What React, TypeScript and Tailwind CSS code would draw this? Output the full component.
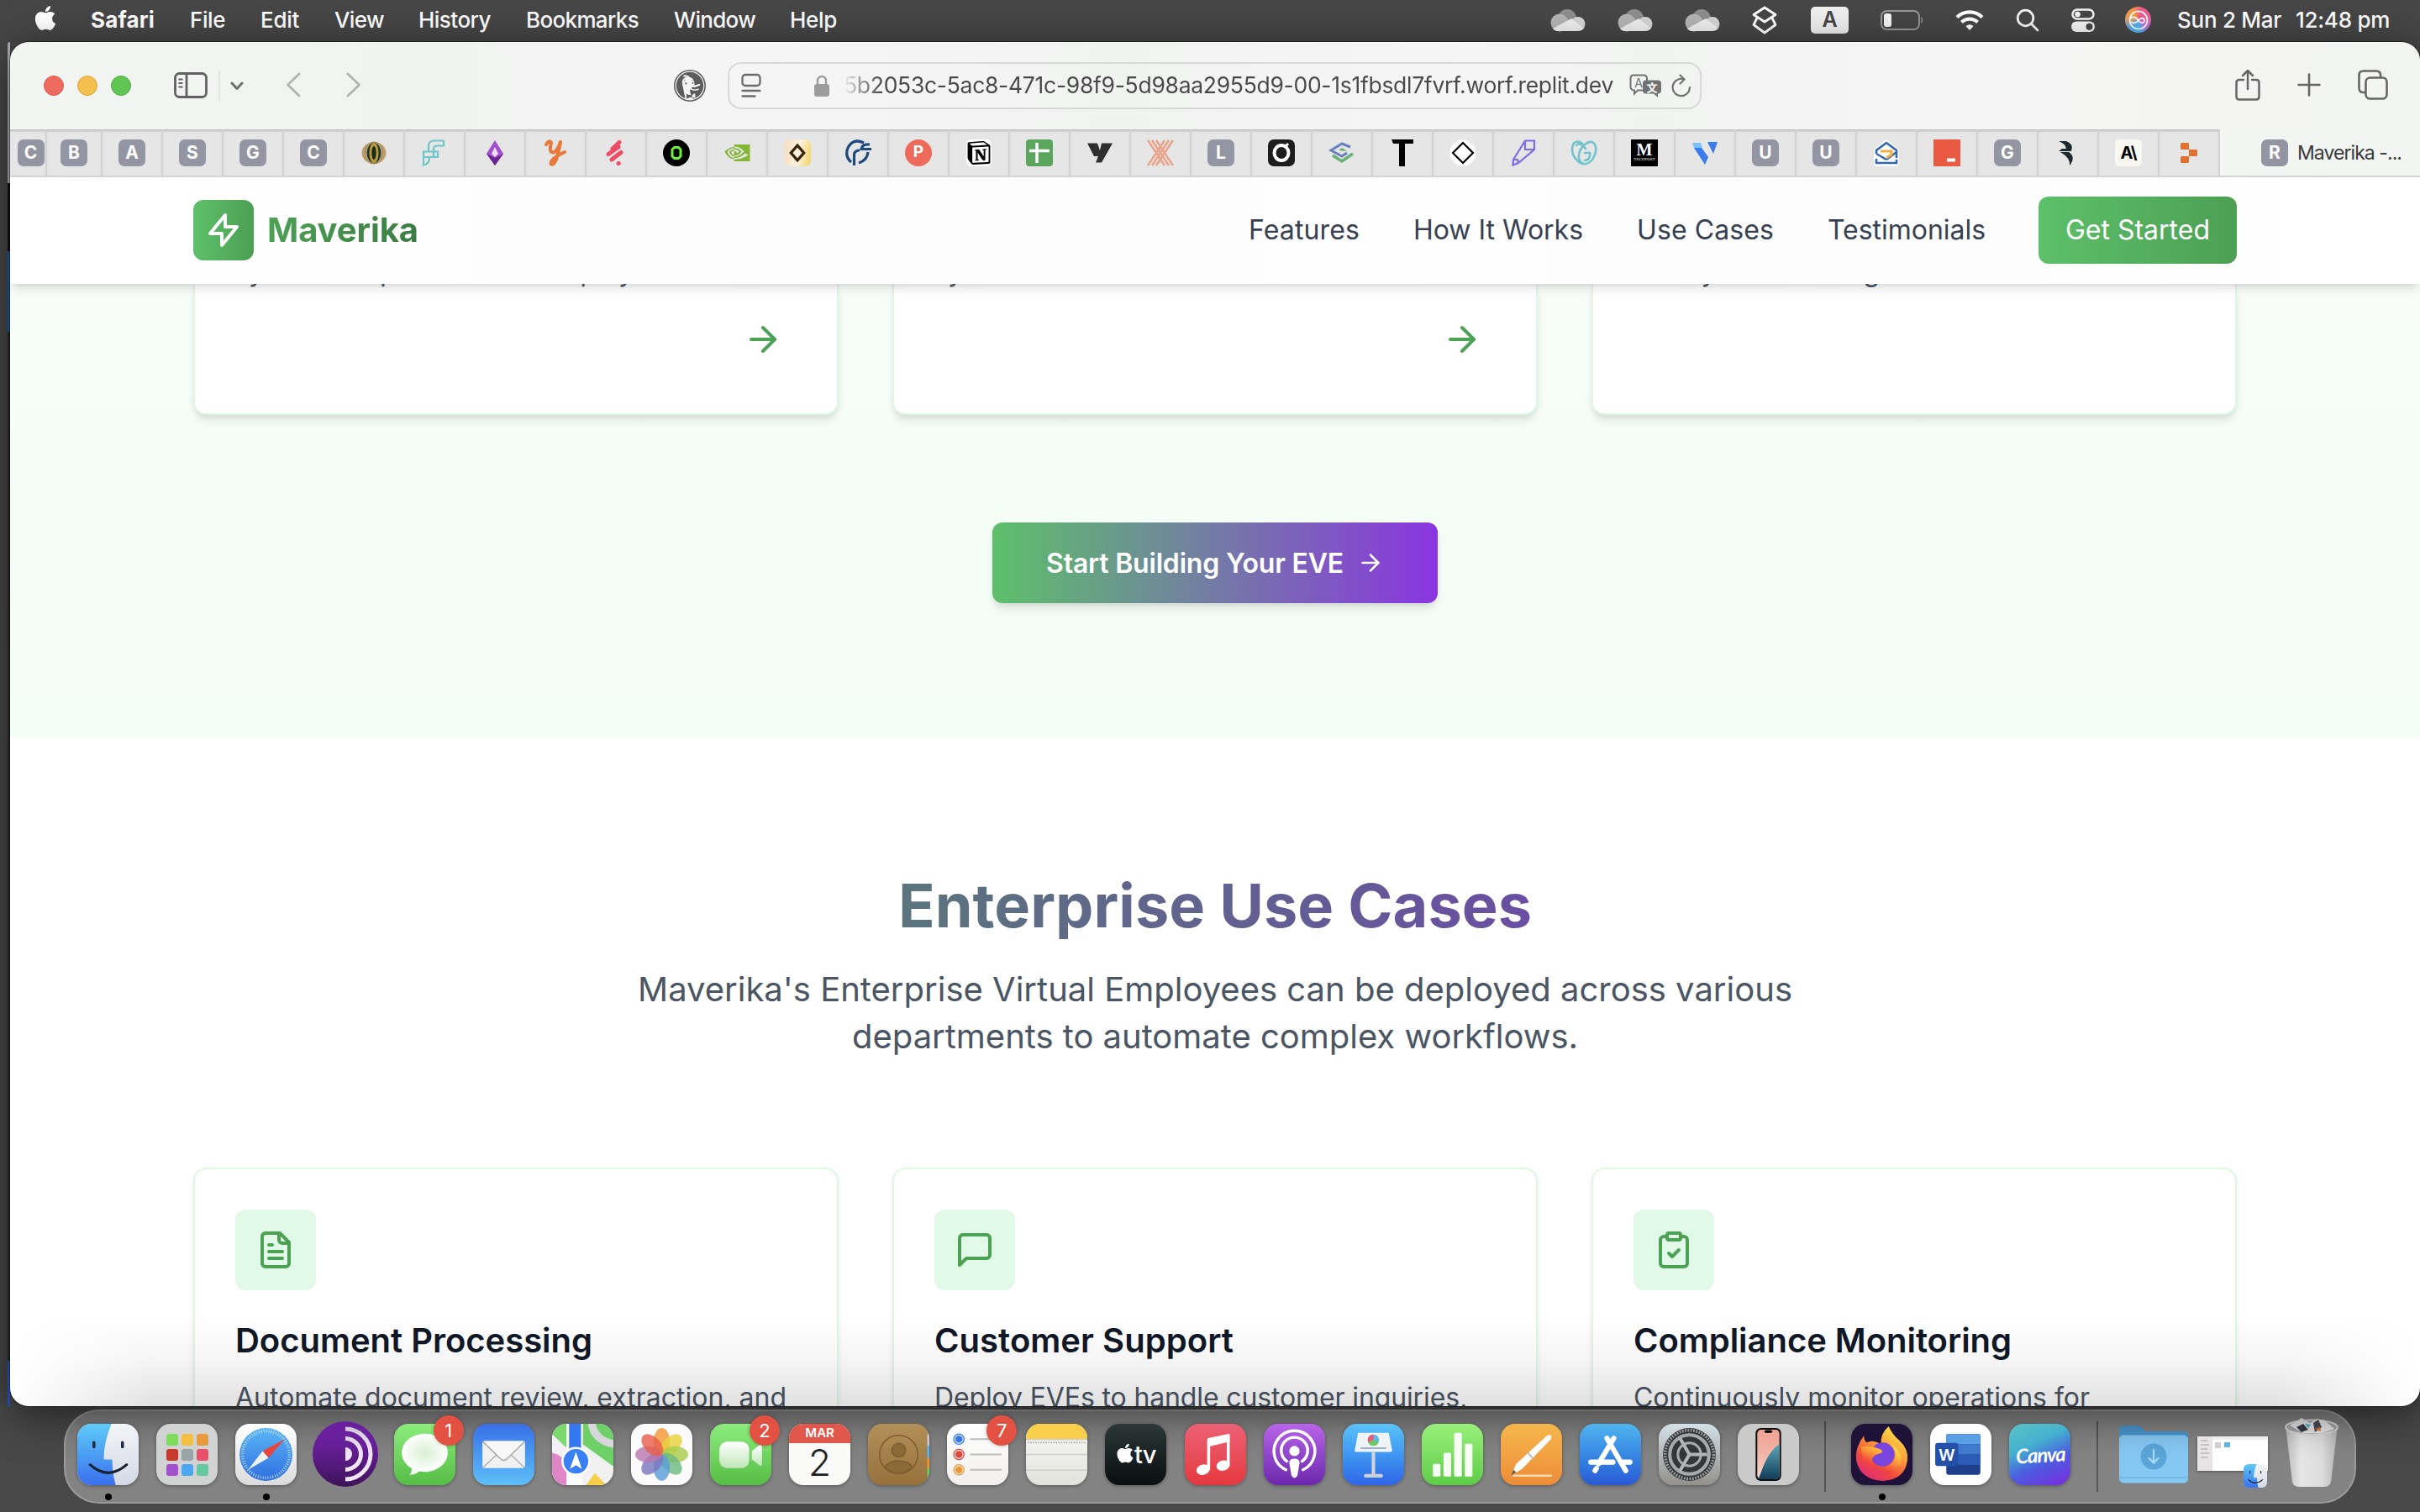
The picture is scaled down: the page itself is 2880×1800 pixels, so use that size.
import React, { useLayoutEffect, useRef } from "react";
import { ArrowRight, ClipboardCheck } from "lucide-react";
import { FaApple } from "react-icons/fa";
import { SiNvidia, SiNotion, SiDuckduckgo, SiReplit } from "react-icons/si";

/* Text that spreads its letters to fill the width of its box. */
function Fit({ children, className = "" }: { children: string; className?: string }) {
  const box = useRef<HTMLSpanElement>(null);
  const inner = useRef<HTMLSpanElement>(null);
  useLayoutEffect(() => {
    const b = box.current;
    const i = inner.current;
    if (!b || !i) return;
    i.style.letterSpacing = "0px";
    const spare = b.clientWidth - i.getBoundingClientRect().width;
    i.style.letterSpacing = `${spare / children.length}px`;
  }, [children]);
  return (
    <span ref={box} className={`block shrink-0 whitespace-nowrap ${className}`}>
      <span ref={inner}>{children}</span>
    </span>
  );
}

/* ---------- Menu bar ---------- */

function Cloud({ className }: { className: string }) {
  return (
    <svg viewBox="0 0 42 28" className={`h-[28px] w-[42px] shrink-0 ${className}`}>
      <circle cx="20" cy="12" r="11" fill="#8d8d8d" />
      <circle cx="11" cy="17" r="10.500" fill="#b5b5b5" />
      <circle cx="33" cy="18.500" r="8.500" fill="#d6d6d6" />
      <path d="M3 24 L25 12 L40 24 Q37 27 33 27 L9 27 Q5 27 3 24Z" fill="#efefef" />
    </svg>
  );
}

function MenuBar() {
  return (
    <div className="flex h-[50px] shrink-0 items-center bg-[#464646] pb-[3px] text-[26px] leading-[47px] font-medium text-white">
      <FaApple className="-mt-1 ml-[39px] h-[33px] w-[30px] shrink-0" />
      <Fit className="ml-[39px] w-[76px] font-bold">Safari</Fit>
      <Fit className="ml-[42px] w-[42px]">File</Fit>
      <Fit className="ml-[42px] w-[46px]">Edit</Fit>
      <Fit className="ml-[42px] w-[59px]">View</Fit>
      <Fit className="ml-[41px] w-[86px]">History</Fit>
      <Fit className="ml-[42px] w-[134px]">Bookmarks</Fit>
      <Fit className="ml-[42px] w-[97px]">Window</Fit>
      <Fit className="ml-[41px] w-[56px]">Help</Fit>

      <Cloud className="ml-auto" />
      <Cloud className="ml-[38px]" />
      <Cloud className="ml-[38px]" />
      <svg viewBox="0 0 32 34" className="ml-[37px] h-[34px] w-[32px] shrink-0" fill="none" stroke="#fff" strokeWidth="2.800" strokeLinejoin="round">
        <path d="M16 2 L29 10.500 L16 19 L3 10.500Z" />
        <path d="M7 14.500 L3 22.500 L16 32 L29 22.500 L25 14.500" />
      </svg>
      <div className="ml-[39px] flex h-[32px] w-[45px] shrink-0 items-center justify-center rounded-[5px] bg-[#efefef] text-[25px] font-semibold text-[#464646]">A</div>
      <svg viewBox="0 0 52 26" className="ml-[38px] h-[26px] w-[52px] shrink-0">
        <rect x="1" y="2" width="45" height="22" rx="6.500" fill="none" stroke="#989898" strokeWidth="2" />
        <rect x="4" y="5" width="9" height="16" rx="3" fill="#f4f4f4" />
        <path d="M48.500 9 Q52 13 48.500 17Z" fill="#989898" />
      </svg>
      <svg viewBox="0 0 34 26" className="ml-[37px] h-[26px] w-[34px] shrink-0" fill="none" stroke="#fff" strokeWidth="4.300">
        <path d="M2 9.500 A21.500 21.500 0 0 1 32 9.500" />
        <path d="M7.500 15.500 A13.500 13.500 0 0 1 26.500 15.500" />
        <path d="M12.500 20.300 Q17 16 21.500 20.300 L17 25Z" fill="#fff" stroke="none" />
      </svg>
      <svg viewBox="0 0 28 28" className="ml-[38px] h-[28px] w-[28px] shrink-0" fill="none" stroke="#f4f4f4" strokeWidth="2.800" strokeLinecap="round">
        <circle cx="11.500" cy="11.500" r="9.300" />
        <path d="M18.500 18.500 L26 26" />
      </svg>
      <svg viewBox="0 0 28 28" className="ml-[38px] h-[28px] w-[28px] shrink-0">
        <rect x="1.500" y="1.500" width="25" height="11" rx="5.500" fill="none" stroke="#f4f4f4" strokeWidth="2.500" />
        <circle cx="7.500" cy="7" r="3.300" fill="#f4f4f4" />
        <rect x="0" y="15.500" width="28" height="12.500" rx="6.200" fill="#f4f4f4" />
        <circle cx="21.500" cy="21.700" r="4" fill="#464646" />
      </svg>
      <div className="ml-[36px] flex h-[31px] w-[31px] shrink-0 items-center justify-center rounded-full bg-[conic-gradient(from_20deg,#f3578f,#e8618f,#c56be0,#4cb8f0,#5aa8e8,#e8a060,#f59a3c,#f3578f)]">
        <svg viewBox="0 0 30 30" className="h-[30px] w-[30px]" fill="none" stroke="#fff" strokeWidth="1.700">
          <circle cx="15" cy="15" r="10.500" />
          <path d="M5 13 C10 9 13 13 15 15.500 C17.500 19 22 19 22 15.300 C22 11.500 17.500 12 15 15 C12.500 18.500 8 20 6.500 16.500" />
        </svg>
      </div>
      <Fit className="ml-[31px] w-[124px]">Sun 2 Mar</Fit>
      <Fit className="mr-[36px] ml-[17px] w-[112px]">12:48 pm</Fit>
    </div>
  );
}

/* ---------- Safari toolbar ---------- */

function Toolbar() {
  return (
    <div className="flex h-[104px] shrink-0 items-center bg-[linear-gradient(90deg,#f3f5f2,#f1f3f1_18%,#f5f5f5_32%,#f1f3f1_46%,#f5f5f5_60%,#f1f3f1_68%,#f5f5f5_80%,#f3f5f1)]">
      <span className="ml-[40px] h-[24px] w-[24px] rounded-full border border-[#d9594d] bg-[#ec6a5e]" />
      <span className="ml-[16px] h-[24px] w-[24px] rounded-full border border-[#dda33a] bg-[#f4bf4f]" />
      <span className="ml-[16px] h-[24px] w-[24px] rounded-full border border-[#50a83d] bg-[#61c554]" />
      <svg viewBox="0 0 40 31" className="-mt-[2px] ml-[51px] h-[31px] w-[40px]" fill="none" stroke="#616161" strokeWidth="2.800">
        <rect x="1.500" y="1.500" width="37" height="28" rx="5" />
        <path d="M15 2V29" />
        <path d="M5.500 8.500h5M5.500 13h5M5.500 17.500h5" strokeWidth="2" />
      </svg>
      <span className="ml-[13px] h-[36px] w-[2px] bg-[#e2e3e2]" />
      <svg viewBox="0 0 16 11" className="ml-[12px] h-[11px] w-[16px]" fill="none" stroke="#6e6e6e" strokeWidth="3" strokeLinecap="round" strokeLinejoin="round">
        <path d="M2 2 L8 8.500 L14 2" />
      </svg>
      <svg viewBox="0 0 18 30" className="-mt-[2px] ml-[50px] h-[30px] w-[18px]" fill="none" stroke="#b2b3b2" strokeWidth="2.800" strokeLinecap="round" strokeLinejoin="round">
        <path d="M16 2 L2.500 15 L16 28" />
      </svg>
      <svg viewBox="0 0 18 30" className="-mt-[2px] ml-[54px] h-[30px] w-[18px]" fill="none" stroke="#b2b3b2" strokeWidth="2.800" strokeLinecap="round" strokeLinejoin="round">
        <path d="M2 2 L15.500 15 L2 28" />
      </svg>
      <SiDuckduckgo className="ml-[372px] h-[38px] w-[38px] shrink-0 text-[#5c5c5c]" />

      <div className="ml-[26px] flex h-[56px] w-[1159px] shrink-0 items-center rounded-[16px] border-2 border-[#d7d8d7]">
        <svg viewBox="0 0 24 30" className="ml-[14px] h-[30px] w-[24px]" fill="none" stroke="#6b6b6b" strokeWidth="2.300" strokeLinecap="round">
          <rect x="1.500" y="2" width="21" height="13" rx="3.500" />
          <path d="M1.500 21h21M1.500 27.500h15" />
        </svg>
        <svg viewBox="0 0 18 26" className="ml-[63px] h-[26px] w-[18px]">
          <path d="M4 12 V7 a5 5 0 0 1 10 0 V12" fill="none" stroke="#9c9c9c" strokeWidth="2.400" />
          <rect x="0" y="11" width="18" height="15" rx="3" fill="#9c9c9c" />
        </svg>
        <Fit className="ml-[17px] w-[916px] bg-[linear-gradient(90deg,transparent,#48484880_2%,#484848_5%)] bg-clip-text text-[26.500px] text-transparent">5b2053c-5ac8-471c-98f9-5d98aa2955d9-00-1s1fbsdl7fvrf.worf.replit.dev</Fit>
        <svg viewBox="0 0 38 28" className="ml-[19px] h-[28px] w-[38px] shrink-0">
          <path d="M5 1.500 h12 q4 0 4 4 v10 q0 4 -4 4 h-7 l-4 4 v-4 q-4 0 -4.500 -4 v-10 q0 -4 3.500 -4Z" fill="none" stroke="#727272" strokeWidth="2" />
          <text x="11" y="15.500" textAnchor="middle" fontSize="14" fill="#727272">A</text>
          <path d="M20 7.500 h14 q4 0 4 4 v8 q0 4 -4 4 v4.500 l-5 -4.500 h-9 q-4 0 -4 -4 v-8 q0 -4 4 -4Z" fill="#727272" />
          <text x="27" y="20.500" textAnchor="middle" fontSize="13" fontWeight="bold" fill="#fff" fontFamily="Noto Sans CJK SC">文</text>
        </svg>
        <svg viewBox="0 0 24 28" className="ml-[12px] h-[28px] w-[24px] shrink-0" fill="none" stroke="#727272" strokeWidth="2.200" strokeLinecap="round" strokeLinejoin="round">
          <path d="M14 6 A10.200 10.200 0 1 0 22 16" />
          <path d="M10.500 1.500 L15.500 6.500 L10.500 11.500" />
        </svg>
      </div>

      <svg viewBox="0 0 30 38" className="-mt-[2px] ml-auto h-[38px] w-[30px]" fill="none" stroke="#666" strokeWidth="2.500" strokeLinecap="round" strokeLinejoin="round">
        <path d="M10 13 H5 q-3.500 0 -3.500 3.500 V33 q0 3.500 3.500 3.500 H25 q3.500 0 3.500 -3.500 V16.500 q0 -3.500 -3.500 -3.500 H20" />
        <path d="M15 24 V2 M9 8 L15 2 L21 8" />
      </svg>
      <svg viewBox="0 0 28 28" className="-mt-[2px] ml-[44px] h-[28px] w-[28px]" stroke="#666" strokeWidth="2.600" strokeLinecap="round">
        <path d="M14 1.500V26.500M1.500 14H26.500" />
      </svg>
      <svg viewBox="0 0 36 36" className="-mt-[2px] mr-[38px] ml-[44px] h-[36px] w-[36px]" fill="none" stroke="#666" strokeWidth="2.600">
        <rect x="9.500" y="9.500" width="25" height="25" rx="5" />
        <path d="M9.500 27 H6.500 q-5 0 -5 -5 V6.500 q0 -5 5 -5 H22 q5 0 5 5 V9.500" />
      </svg>
    </div>
  );
}

/* ---------- Tab strip ---------- */

function Letter({ c }: { c: string }) {
  return <span className="flex h-[32px] w-[32px] shrink-0 items-center justify-center rounded-[7px] bg-[#9495a2] text-[21px] font-bold text-white">{c}</span>;
}

function G({ children }: { children: React.ReactNode }) {
  return <svg viewBox="0 0 32 32" className="h-[32px] w-[32px] shrink-0">{children}</svg>;
}

const favicons: React.ReactNode[] = [
  <Letter c="A" />,
  <Letter c="S" />,
  <Letter c="G" />,
  <Letter c="C" />,
  <G>
    <ellipse cx="16" cy="16" rx="14.500" ry="13" fill="#c0a06a" />
    <ellipse cx="16" cy="16" rx="10.500" ry="13" fill="#c8a8a0" stroke="#9c8236" />
    <ellipse cx="16" cy="16" rx="8.500" ry="12" fill="#1d3a26" />
    <ellipse cx="16" cy="16" rx="5.500" ry="12" fill="#bb9a3c" />
    <ellipse cx="16" cy="16" rx="2.600" ry="8" fill="#182c1c" />
  </G>,
  <G>
    <path d="M27 1.500 H16 Q9 1.500 9 8 V14 M27 1.500 V7.500 H19 Q15 7.500 15 12 V21 M3 14.500 H20 V21 H3Z M3 21 V30.500 Q10 29 10 22" fill="none" stroke="#6fc5c8" strokeWidth="2.200" />
  </G>,
  <G>
    <path d="M16 1 L26 17 L16 31 L6 17Z" fill="#a24fd0" />
    <path d="M16 9 L20 17 L16 21 L12 17Z" fill="#f0e0ff" />
    <path d="M6 17 L16 31 L26 17 L16 22Z" fill="#6a2590" />
  </G>,
  <G>
    <path d="M5 6 Q9 0 11 4 Q8 15 13 15.500 Q18 15 22 3 Q19 18 17 24 Q14 31 11 29.500 Q8 24 27 15" fill="none" stroke="#e8793a" strokeWidth="4" strokeLinecap="round" strokeLinejoin="round" />
  </G>,
  <G>
    <g stroke="#ee4b66" strokeWidth="5" strokeLinecap="round">
      <path d="M20 3.500 L12 11M7 17.500 L19 9M11 24 L22 15.500" />
      <path d="M19 28.500h.2" />
    </g>
  </G>,
  <G>
    <circle cx="16" cy="16" r="16" fill="#000" />
    <path d="M13.500 9.500 H18.500 L21 12 V20 L18.500 22.500 H13.500 L11 20 V12Z" fill="none" stroke="#6df23c" strokeWidth="3" />
  </G>,
  <SiNvidia className="h-[30px] w-[31px] text-[#85b737]" />,
  <span className="flex h-[32px] w-[32px] items-center justify-center rounded-[7px] bg-[linear-gradient(100deg,#f4dcc0,#fdf3e0_55%,#f5cf5a)]">
    <svg viewBox="0 0 20 20" className="h-[22px] w-[22px]"><path d="M10 2 L17 10 L10 18 L3 10Z" fill="none" stroke="#38260f" strokeWidth="3" /></svg>
  </span>,
  <G>
    <path d="M23 4 Q10 -2 4 10 Q0 20 8 27 M30 6 Q21 5 20 11.500 H32 M28 15 Q27 25 17 28 M11.500 31 V18 Q12 13 18 13" fill="none" stroke="#204a7e" strokeWidth="3.200" />
  </G>,
  <span className="flex h-[32px] w-[32px] items-center justify-center rounded-full bg-[#ee6a5a] text-[19px] font-bold text-white">P</span>,
  <span className="flex h-[32px] w-[30px] items-center justify-center rounded-[6px] bg-white"><SiNotion className="h-[28px] w-[28px] text-black" /></span>,
  <G>
    <rect width="32" height="32" rx="4" fill="#5ba65c" />
    <path d="M13 4V28M4 13.500H28" stroke="#fff" strokeWidth="3.400" />
  </G>,
  <G>
    <path d="M1 4.500 H13 L16 13 L18 4.500 H31 L18 27.500 H11 L14 20 H9Z" fill="#2f2f2f" />
  </G>,
  <G>
    <g fill="none" stroke="#e9a48c" strokeWidth="2.600">
      <path d="M1 1 L21 31M6 1 L26 31M11 1 L31 31M31 1 L11 31M26 1 L6 31M21 1 L1 31" />
    </g>
  </G>,
  <Letter c="L" />,
  <G>
    <rect width="32" height="32" rx="7" fill="#1d1d1d" />
    <ellipse cx="16" cy="16" rx="8.500" ry="9" fill="none" stroke="#fff" strokeWidth="4" />
    <path d="M21 8 L24 5" stroke="#fff" strokeWidth="3" />
  </G>,
  <G>
    <path d="M26 9 L16 5 L3 13 L16 20 L22 16" fill="none" stroke="#6a80c0" strokeWidth="3" />
    <path d="M12 13 L16 10 L22 14Z" fill="#66b072" />
    <path d="M5 19 L16 26 L29 17" fill="none" stroke="#68b176" strokeWidth="3.500" />
  </G>,
  <G>
    <path d="M3 0 H29 V5 H19 V32 H12 V5 H5Z" fill="#000" />
  </G>,
  <G>
    <circle cx="16" cy="16" r="15.500" fill="#fff" />
    <path d="M16 4 L28 16 L16 28 L4 16Z" fill="#fff" stroke="#000" strokeWidth="2.200" />
  </G>,
  <G>
    <path d="M18 1.500 H29 V12 L10 28 L3.500 30.500 L4 24Z M18 1.500 V12 H29 M4 24 L9 24 L10 28" fill="none" stroke="#7f6bea" strokeWidth="2.200" />
  </G>,
  <G>
    <path d="M16 7 Q9 -1 3.500 5 Q-1 16 8 25 Q17 34 26 24 Q33 13 28.500 5 Q24 0 16 7 Q9 14 10 22 Q11 27 14 28 M18 11 Q11 2 7 7 M23 16 H17 M23 16 Q24 24 17 25" fill="none" stroke="#72c3cb" strokeWidth="2.600" strokeLinecap="round" />
  </G>,
  <span className="flex h-[32px] w-[32px] flex-col items-center justify-center bg-black text-white">
    <span className="font-[Liberation_Serif] text-[20px] leading-[17px] font-black">M</span>
    <span className="font-[Liberation_Serif] text-[5px] leading-[6px]">TECHPOST</span>
  </span>,
  <G>
    <path d="M1 4 H11 L13 10 H3Z" fill="#7cc3f5" />
    <path d="M3 10 H12 L20 21 L16 30Z" fill="#3a7bf0" />
    <path d="M19 3 H31 L26 17Z" fill="#3a7bf0" />
  </G>,
  <Letter c="U" />,
  <Letter c="U" />,
  <G>
    <path d="M16 0 L31 12 V28 Q31 32 27 32 H5 Q1 32 1 28 V12Z" fill="#fff" />
    <path d="M4 17 V13 L16 4 L28 13 V22 M16 24 L4 17 M4 23 V28 H28 V24 M16 24 L28 15" fill="none" stroke="#3367b0" strokeWidth="2.600" />
    <path d="M9 14 H22 V18 L16 22" fill="none" stroke="#f0b040" strokeWidth="3.200" />
  </G>,
  <G>
    <rect width="32" height="32" fill="#ea5a42" />
    <rect x="16" y="22.500" width="10" height="4" fill="#fff" />
  </G>,
  <Letter c="G" />,
  <G>
    <path d="M5 2 H14 Q23 5 20 14 H5 L9 11 H14 Q13 5 5 2Z M7 15 H17 Q26 21 18 31 Q19 22 7 15Z" fill="#1c2b30" />
  </G>,
  <span className="flex h-[32px] w-[32px] items-center justify-center rounded-[5px] bg-[#f8f7f2] text-[20px] font-bold tracking-[-1px] text-black">A\</span>,
  <SiReplit className="h-[24px] w-[24px] text-[#e1712f]" />,
];

function TabStrip() {
  return (
    <div className="flex h-[57px] shrink-0 border-b-2 border-[#d2d3d2] bg-[#e5e6e5]">
      <div className="flex h-full w-[44px] shrink-0 items-center justify-center border-r-2 border-[#d2d3d2] pl-[7px] shadow-[inset_0_3px_3px_-1px_rgba(0,0,0,0.18)]"><Letter c="C" /></div>
      <div className="flex h-full w-[66px] shrink-0 items-center justify-center border-r-2 border-[#d2d3d2] shadow-[inset_0_3px_3px_-1px_rgba(0,0,0,0.18)]"><Letter c="B" /></div>
      {favicons.map((icon, i) => (
        <div key={i} className="flex h-full w-[72px] shrink-0 items-center justify-center border-r-2 border-[#d2d3d2] shadow-[inset_0_3px_3px_-1px_rgba(0,0,0,0.18)]">{icon}</div>
      ))}
      <div className="flex h-full flex-1 items-center bg-[#f3f5f2] pl-[49px]">
        <Letter c="R" />
        <Fit className="ml-[11px] w-[124px] pt-[2px] text-[23px] text-[#3a3a3a]">Maverika -...</Fit>
      </div>
    </div>
  );
}

/* ---------- Maverika site ---------- */

function SiteHeader() {
  return (
    <header className="relative z-10 h-[127px] shrink-0 bg-[linear-gradient(90deg,#ffffff,#fcfcfc_35%,#fefefe_60%,#fcfcfc_72%,#ffffff)] shadow-[0_8px_12px_-2px_rgba(0,0,0,0.1),0_4px_8px_-4px_rgba(0,0,0,0.1)]">
      <div className="mx-auto flex h-[126px] w-[2432px] items-center">
        <div className="flex h-[72px] w-[72px] items-center justify-center rounded-[12px] bg-linear-to-r/srgb from-[#5dc06a] to-[#4c9f53]">
          <svg viewBox="0 0 24 24" className="h-[48px] w-[48px]" fill="none" stroke="#fff" strokeWidth="2" strokeLinecap="round" strokeLinejoin="round">
            <path d="M13 10V3L4 14h7v7l9-11h-7z" />
          </svg>
        </div>
        <Fit className="ml-4 w-[180px] bg-linear-to-r/srgb from-[#4ca154] to-[#3b7c43] bg-clip-text text-[40px] leading-[56px] font-bold text-transparent">Maverika</Fit>
        <nav className="ml-auto flex items-center text-[32px] leading-[48px] text-[#374151]">
          <Fit className="w-[132px]">Features</Fit>
          <Fit className="ml-[64px] w-[202px]">How It Works</Fit>
          <Fit className="ml-[64px] w-[163px]">Use Cases</Fit>
          <Fit className="ml-[64px] w-[188px]">Testimonials</Fit>
          <div className="ml-[63px] flex h-[80px] w-[236px] items-center justify-center rounded-[12px] bg-linear-to-r/srgb from-[#5dc06a] to-[#4c9f53] text-white">
            <Fit className="w-[172px]">Get Started</Fit>
          </div>
        </nav>
      </div>
    </header>
  );
}

function DocumentIcon({ className }: { className: string }) {
  return (
    <svg viewBox="0 0 24 24" className={className} fill="none" stroke="currentColor" strokeWidth="2" strokeLinecap="round" strokeLinejoin="round">
      <path d="M14.500 2H6a2 2 0 0 0-2 2v16a2 2 0 0 0 2 2h12a2 2 0 0 0 2-2V7.500Z" />
      <path d="M14 2v4a2 2 0 0 0 2 2h4M10 9H8M16 13H8M16 17H8" />
    </svg>
  );
}

function MessageIcon({ className }: { className: string }) {
  return (
    <svg viewBox="0 0 24 24" className={className} fill="none" stroke="currentColor" strokeWidth="2" strokeLinecap="round" strokeLinejoin="round">
      <path d="M21 15a2 2 0 0 1-2 2H7l-4 4V5a2 2 0 0 1 2-2h14a2 2 0 0 1 2 2z" />
    </svg>
  );
}

const steps = [
  { tail: "your Enterprise Virtual Employee", arrow: true },
  { tail: "your business needs and tools", arrow: true },
  { tail: "many with training", arrow: false },
];

const cases = [
  { Icon: DocumentIcon, title: "Document Processing", w: "w-[425px]", text: "Automate document review, extraction, and", tw: "w-[656px]" },
  { Icon: MessageIcon, title: "Customer Support", w: "w-[356px]", text: "Deploy EVEs to handle customer inquiries,", tw: "w-[634px]" },
  { Icon: ClipboardCheck, title: "Compliance Monitoring", w: "w-[450px]", text: "Continuously monitor operations for", tw: "w-[543px]" },
];

function Site() {
  return (
    <div className="relative flex min-h-0 flex-1 flex-col overflow-hidden bg-white">
      <SiteHeader />
      <section className="h-[540px] shrink-0 overflow-hidden bg-linear-to-b from-[#f8fdf9] to-[#f2fdf5]">
        <div className="mx-auto grid w-[2432px] grid-cols-3 gap-16">
          {steps.map((s) => (
            <div key={s.tail} className="flex h-[156px] flex-col rounded-b-[16px] border-2 border-t-0 border-[#dff8e6] bg-white px-[64px] shadow-[0_8px_12px_-2px_rgba(0,0,0,0.1),0_4px_8px_-4px_rgba(0,0,0,0.1)]">
              <p className="-mt-[38px] text-[32px] leading-[48px] whitespace-nowrap text-[#4b5563]">{s.tail}</p>
              {s.arrow && <ArrowRight className="mt-8 h-[48px] w-[48px] self-end text-[#4ca154]" />}
            </div>
          ))}
        </div>
        <div className="mx-auto mt-[128px] flex h-[96px] w-[530px] items-center rounded-[12px] bg-linear-to-r/srgb from-[#5dc06a] to-[#8a35e0] px-[64px] text-[32px] leading-[56px] font-medium text-white shadow-[0_8px_12px_-2px_rgba(0,0,0,0.1),0_4px_8px_-4px_rgba(0,0,0,0.1)]">
          <Fit className="w-[354px] pt-[2px] font-[560]">Start Building Your EVE</Fit>
          <ArrowRight className="ml-4 h-8 w-8" />
        </div>
      </section>

      <section className="mx-auto w-[2432px] shrink-0">
        <h2 className="mt-[160px] flex justify-center bg-linear-to-r/srgb from-[#4a9f54] to-[#7a24cb] bg-clip-text text-[72px] leading-[80px] font-bold text-transparent">
          <Fit className="w-[754px]">Enterprise Use Cases</Fit>
        </h2>
        <div className="mt-8 flex flex-col items-center text-[40px] leading-[56px] text-[#4b5563]">
          <Fit className="w-[1374px]">Maverika's Enterprise Virtual Employees can be deployed across various</Fit>
          <Fit className="w-[864px]">departments to automate complex workflows.</Fit>
        </div>
        <div className="mt-[128px] grid grid-cols-3 gap-16">
          {cases.map(({ Icon, title, w, text, tw }) => (
            <div key={title} className="h-[440px] rounded-[16px] border-2 border-[#dff8e6] bg-white p-[48px] shadow-[0_2px_6px_rgba(0,0,0,0.08)]">
              <div className="flex h-[96px] w-[96px] items-center justify-center rounded-[12px] bg-[#e1fae8]">
                <Icon className="h-[48px] w-[48px] text-[#4ca154]" />
              </div>
              <h3 className="mt-8 text-[40px] leading-[56px] font-semibold text-[#111827]"><Fit className={w}>{title}</Fit></h3>
              <p className="mt-4 text-[32px] leading-[48px] text-[#4b5563]"><Fit className={tw}>{text}</Fit></p>
            </div>
          ))}
        </div>
      </section>
      <div className="absolute inset-x-0 bottom-0 h-[110px] bg-linear-to-b from-transparent via-black/4 to-black/12 [mask-image:linear-gradient(90deg,transparent,black_6%,black_94%,transparent)]" />
    </div>
  );
}

/* ---------- Dock ---------- */

function Tile({ bg = "", children, badge }: { bg?: string; children?: React.ReactNode; badge?: string }) {
  return (
    <div className="flex w-[94.100px] shrink-0 justify-center">
      <div className="relative">
        <div className={`flex h-[73px] w-[73px] items-center justify-center overflow-hidden rounded-[17px] shadow-[0_1px_4px_rgba(0,0,0,0.35)] ${bg}`}>{children}</div>
        {badge && <span className="absolute -top-[10px] -right-[10px] flex h-[36px] w-[36px] items-center justify-center rounded-full bg-[#e25141] text-[22px] text-white shadow-[0_0_4px_rgba(0,0,0,0.3)]">{badge}</span>}
      </div>
    </div>
  );
}

function Art({ children }: { children: React.ReactNode }) {
  return <svg viewBox="0 0 72 72" className="h-full w-full">{children}</svg>;
}

function FinderFace() {
  return (
    <Art>
      <defs>
        <linearGradient id="fb" x2="0" y2="1"><stop stopColor="#5ecbf8" /><stop offset="1" stopColor="#3a70ee" /></linearGradient>
        <linearGradient id="fw" x2="0" y2="1"><stop stopColor="#f4f5f8" /><stop offset="1" stopColor="#d3d9e6" /></linearGradient>
      </defs>
      <rect width="72" height="72" fill="url(#fw)" />
      <path d="M0 0 H40 Q31 22 31 42 H41 Q41 58 45 72 H0Z" fill="url(#fb)" />
      <path d="M19.500 22V27M53 22V27" stroke="#1d2a3c" strokeWidth="3.500" strokeLinecap="round" />
      <path d="M15 48 Q36 67 58 48" fill="none" stroke="#16202e" strokeWidth="3" strokeLinecap="round" />
    </Art>
  );
}

const padColors = ["#7fdc58", "#f3bf42", "#ea9a3a", "#c93a2e", "#9aa3a8", "#e8506a", "#a24fd0", "#4ba8f0", "#66c8a0"];
const petals = ["#f29a38", "#e8d23c", "#a8cc4c", "#6cba80", "#5a9ed8", "#7a78c0", "#b878b0", "#e8604c"];

function Dock() {
  return (
    <div className="mt-[4px] ml-[76px] flex h-[112px] w-[2728px] shrink-0 justify-center rounded-[42px] border-2 border-[#9b9b9b] bg-[#838383] pt-[15px]">
      <div>
        <Tile><FinderFace /></Tile>
        <span className="mx-auto mt-[10px] block h-2 w-2 rounded-full bg-black" />
      </div>
      <Tile bg="bg-[#d1d3d3]">
        <div className="grid grid-cols-3 gap-x-[4px] gap-y-[4px]">
          {padColors.map((c) => <span key={c} className="h-[14px] w-[14px] rounded-[3px]" style={{ backgroundColor: c }} />)}
        </div>
      </Tile>
      <div>
        <Tile bg="bg-linear-to-b from-white to-[#dcdcdc]">
          <Art>
            <defs><linearGradient id="sf" x2="0" y2="1"><stop stopColor="#5ab6f5" /><stop offset="1" stopColor="#2f6fe0" /></linearGradient></defs>
            <circle cx="36" cy="36" r="31" fill="url(#sf)" />
            <circle cx="36" cy="36" r="27.500" fill="none" stroke="#d6ebff" strokeWidth="3.500" strokeDasharray="0.800 2.080" />
            <path d="M58 18 L32 32 L39 40Z" fill="#e8453c" />
            <path d="M15 54 L32 32 L39 40Z" fill="#f2f2f2" />
          </Art>
        </Tile>
        <span className="mx-auto mt-[10px] block h-2 w-2 rounded-full bg-black" />
      </div>
      <div className="-mt-[3px] flex w-[94.100px] shrink-0 justify-center">
        <svg viewBox="0 0 78 78" className="h-[78px] w-[78px]">
          <defs><linearGradient id="tor" x2="0" y2="1"><stop stopColor="#8428c4" /><stop offset="1" stopColor="#3d1358" /></linearGradient></defs>
          <circle cx="39" cy="39" r="39" fill="url(#tor)" />
          <path d="M39 9 A30 30 0 0 1 39 69M39 20.500 A18.500 18.500 0 0 1 39 57.500" fill="none" stroke="#f2e6fa" strokeWidth="5" />
          <path d="M39 31 A8 8 0 0 1 39 47Z" fill="#f2e6fa" />
        </svg>
      </div>
      <Tile bg="bg-linear-to-b from-[#8ced7c] to-[#56bd45]" badge="1">
        <Art>
          <defs><radialGradient id="msg"><stop stopColor="#d8efd2" /><stop offset="1" stopColor="#fff" /></radialGradient></defs>
          <path d="M20 48 Q22 56 18 60 Q28 60 32 52Z" fill="#f0faee" />
          <ellipse cx="36" cy="34" rx="27" ry="22.500" fill="url(#msg)" />
        </Art>
      </Tile>
      <Tile bg="bg-linear-to-b from-[#3a6fe8] to-[#5fbff7]">
        <Art>
          <rect x="11" y="20" width="50" height="32" rx="3" fill="#f1f1f1" />
          <path d="M12 51 L29 35 M60 51 L43 35" stroke="#b2b2b2" strokeWidth="1.500" />
          <path d="M11.500 21 L32 41 Q36 45 40 41 L60.500 21" fill="#f8f8f8" stroke="#a8a8a8" strokeWidth="1.500" />
        </Art>
      </Tile>
      <Tile bg="bg-[#f0f0f0]">
        <Art>
          <path d="M0 14 L44 54 L72 72 H0Z" fill="#f2f2f6" />
          <path d="M36 0 H72 V50 L36 24Z" fill="#6fd06a" />
          <path d="M0 0 H17 V28 L0 12Z" fill="#7ad86c" />
          <path d="M0 34 Q12 36 17 48 V72 H0Z" fill="#df86c6" />
          <path d="M40 72 L50 58 L64 72Z" fill="#f6cf48" />
          <path d="M46 -4 Q48 20 74 24" fill="none" stroke="#d8d8dc" strokeWidth="9" />
          <rect x="17" y="0" width="19" height="72" fill="#fafafa" />
          <rect x="20" y="0" width="14" height="34" fill="#3478f0" />
          <circle cx="28" cy="44" r="17" fill="#fff" />
          <circle cx="28" cy="44" r="14.500" fill="#3880f4" />
          <path d="M28 33 L35 53 L28 48.500 L21 53Z" fill="#fff" />
        </Art>
      </Tile>
      <Tile bg="bg-[#fbfbfb]">
        <Art>
          {petals.map((c, i) => (
            <ellipse key={c} cx="36" cy="20.500" rx="9.500" ry="15.500" fill={c} opacity="0.82" transform={`rotate(${i * 45} 36 36)`} />
          ))}
        </Art>
      </Tile>
      <Tile bg="bg-linear-to-b from-[#8ced7c] to-[#56bd45]" badge="2">
        <Art>
          <defs><linearGradient id="ft" x2="0" y2="1"><stop stopColor="#fff" /><stop offset="1" stopColor="#bfe6b8" /></linearGradient></defs>
          <rect x="11" y="21" width="35" height="31" rx="9" fill="url(#ft)" />
          <path d="M49 32 L58 25 Q61 23 61 27 V47 Q61 51 58 48.500 L49 42Z" fill="url(#ft)" />
        </Art>
      </Tile>
      <Tile bg="bg-[#fafaf9]">
        <div className="flex h-full w-full flex-col items-center">
          <div className="flex h-[23px] w-full items-center justify-center bg-[#e2574c] text-[15px] font-semibold text-white">MAR</div>
          <div className="text-[44px] leading-[46px] font-light text-[#222]">2</div>
        </div>
      </Tile>
      <Tile bg="bg-linear-to-b from-[#b39058] to-[#96713c]">
        <Art>
          <g fill="none" stroke="#7d5c2e" strokeWidth="1.500">
            <circle cx="36" cy="36" r="22.500" />
            <circle cx="36" cy="31" r="8" fill="#8c6a38" />
            <path d="M20 51 Q24 43.500 36 43.500 Q48 43.500 52 51 Q36 66 20 51Z" fill="#8c6a38" />
          </g>
          <path d="M71 12V26" stroke="#c8c8c8" strokeWidth="3" /><path d="M71 26V40" stroke="#5cb4ea" strokeWidth="3" />
          <path d="M71 40V52" stroke="#ee9336" strokeWidth="3" /><path d="M71 52V64" stroke="#6fd060" strokeWidth="3" />
        </Art>
      </Tile>
      <Tile bg="bg-linear-to-b from-white to-[#f1f0ee]" badge="7">
        <Art>
          <path d="M27 18H64M27 36H64M27 54H64" stroke="#bdbdbd" strokeWidth="1.800" />
          <circle cx="14" cy="18" r="4.800" fill="#3478f0" stroke="#fff" /><circle cx="14" cy="18" r="6" fill="none" stroke="#3478f0" strokeWidth="1.300" />
          <circle cx="14" cy="36" r="4.800" fill="#e2463a" stroke="#fff" /><circle cx="14" cy="36" r="6" fill="none" stroke="#e2463a" strokeWidth="1.300" />
          <circle cx="14" cy="54" r="4.800" fill="#ee9336" stroke="#fff" /><circle cx="14" cy="54" r="6" fill="none" stroke="#ee9336" strokeWidth="1.300" />
        </Art>
      </Tile>
      <Tile bg="bg-linear-to-b from-[#f8f8f7] to-[#e2e2dc]">
        <Art>
          <rect width="72" height="18" fill="#f8cf4a" />
          <path d="M0 18.500H72M0 36H72M0 54.500H72" stroke="#cfcfca" strokeWidth="1.400" />
          <path d="M2 22H70" stroke="#a8a8a4" strokeWidth="1.800" strokeDasharray="1.500 1.500" />
        </Art>
      </Tile>
      <Tile bg="bg-linear-to-b from-[#2c3836] to-[#0a0f11]">
        <div className="flex items-center text-[29px] leading-[32px] font-medium tracking-[-0.500px] text-white">
          <FaApple className="-mt-1 h-[26px] w-[22px]" />tv
        </div>
      </Tile>
      <Tile bg="bg-linear-to-b from-[#ec6074] to-[#e5383e]">
        <Art>
          <path d="M28 21 L51 15 V49" fill="none" stroke="#fff" strokeWidth="3.500" />
          <path d="M26.500 17 L52.500 11.500 V21 L26.500 27Z" fill="#fff" />
          <path d="M28 20V54" stroke="#fff" strokeWidth="3.500" />
          <ellipse cx="21.500" cy="54" rx="8" ry="6" fill="#fff" transform="rotate(-15 21 54)" />
          <ellipse cx="45" cy="49" rx="8" ry="6" fill="#fff" transform="rotate(-15 45 49)" />
        </Art>
      </Tile>
      <Tile bg="bg-linear-to-b from-[#b964ea] to-[#6d27ac]">
        <Art>
          <g fill="none" stroke="#fff" strokeWidth="3.400" strokeLinecap="round">
            <path d="M26 54 A24 24 0 1 1 46 54" />
            <path d="M27 44 A15.500 15.500 0 1 1 45 44" />
          </g>
          <circle cx="36" cy="32" r="6" fill="#fff" />
          <path d="M30 46 Q30 41 36 41 Q42 41 42 46 L39.500 61 Q36 66 32.500 61Z" fill="#fff" />
        </Art>
      </Tile>
      <Tile bg="bg-linear-to-b from-[#5bc3f8] to-[#2f66e8]">
        <Art>
          <path d="M18 10.500 H54 L58 31 Q58 33 55 33 H17 Q14 33 14 31Z" fill="#eef3f8" />
          <path d="M21 28.500H51" stroke="#9fb2c8" strokeWidth="2" />
          <circle cx="36" cy="19" r="6.500" fill="#58b8e8" />
          <path d="M36 19V12.500A6.500 6.500 0 0 0 30 22Z" fill="#ea5a78" />
          <path d="M36 19L30 22A6.500 6.500 0 0 0 42 22Z" fill="#6cc85c" />
          <path d="M36 33V60" stroke="#d2d6dc" strokeWidth="4" />
          <rect x="25" y="59" width="22" height="4" rx="1.500" fill="#cdd2da" />
        </Art>
      </Tile>
      <Tile bg="bg-linear-to-b from-[#98f07a] to-[#5fcc48]">
        <Art>
          <g fill="#f7fff4">
            <rect x="13" y="47" width="9" height="15" rx="1.500" /><rect x="25.500" y="34" width="9" height="28" rx="1.500" />
            <rect x="38" y="10.500" width="9" height="51.500" rx="1.500" /><rect x="50.500" y="23.500" width="9" height="38.500" rx="1.500" />
          </g>
        </Art>
      </Tile>
      <Tile bg="bg-linear-to-b from-[#f5b74c] to-[#ed8c38]">
        <Art>
          <path d="M14 61H60" stroke="#fbd9ae" strokeWidth="2.500" />
          <path d="M12 61 L18 47 L54 14 Q61 11 59 18 L25 53Z" fill="#fbfbfb" />
          <path d="M32 34 L38 41" stroke="#c0c0c0" strokeWidth="2" />
          <path d="M12 61 L15 54 L18 57Z" fill="#6b5130" />
        </Art>
      </Tile>
      <Tile bg="bg-linear-to-b from-[#50b4ee] to-[#2a59d6]">
        <Art>
          <g stroke="#fff" strokeWidth="6" strokeLinecap="round">
            <path d="M40 17 L22 47M18 55 L19.500 52.500M32 17 L54 55M13 45H39M49 45H59" />
          </g>
        </Art>
      </Tile>
      <Tile bg="bg-linear-to-b from-[#d4e0e8] to-[#93918c]">
        <Art>
          <circle cx="36" cy="36" r="31" fill="#333638" />
          <circle cx="36" cy="36" r="28.500" fill="none" stroke="#9a9d9f" strokeWidth="3.500" strokeDasharray="1.800 1.500" />
          <circle cx="36" cy="36" r="23" fill="none" stroke="#a7aaac" strokeWidth="4" />
          <circle cx="36" cy="36" r="13.500" fill="none" stroke="#a7aaac" strokeWidth="3" />
          <path d="M36 36H57M36 36L25 17M36 36L25 55" stroke="#b2b5b7" strokeWidth="4" />
        </Art>
      </Tile>
      <Tile bg="bg-[#c9cac9]">
        <Art>
          <defs>
            <linearGradient id="ph" x2="0" y2="1"><stop stopColor="#f0a293" /><stop offset="0.500" stopColor="#f2b5a6" /><stop offset="1" stopColor="#f7dad0" /></linearGradient>
            <linearGradient id="ps" x2="0" y2="1"><stop stopColor="#5ba8b8" /><stop offset="1" stopColor="#143c58" /></linearGradient>
          </defs>
          <rect x="21" y="5" width="30" height="62" rx="6" fill="#111" />
          <rect x="23" y="7" width="26" height="58" rx="4.500" fill="url(#ph)" />
          <path d="M49 24 Q36 32 27 58 L24 65 H45 Q49 65 49 61Z" fill="url(#ps)" />
          <rect x="31.500" y="7.500" width="9" height="3" rx="1.500" fill="#000" />
        </Art>
      </Tile>
      <div className="flex w-[41px] shrink-0 justify-center"><span className="-mt-[3px] h-[84px] w-[2px] bg-[#565656]" /></div>
      <div>
        <Tile bg="bg-[#1f1238]">
          <Art>
            <defs>
              <linearGradient id="ff" x1="0.900" y1="0" x2="0.300" y2="1"><stop stopColor="#fff04e" /><stop offset="0.400" stopColor="#fda63a" /><stop offset="0.750" stopColor="#f0483c" /><stop offset="1" stopColor="#e02d7a" /></linearGradient>
            </defs>
            <path d="M44 3 Q48 12 56 19 Q68 30 66 43 Q63 66 37 67 Q11 66 6 43 Q4 28 15 14 Q15 19 18 22 Q26 18 35 24 Q34 12 44 3Z" fill="url(#ff)" />
            <circle cx="37" cy="36" r="14" fill="#7a45dc" />
            <path d="M12 27 Q24 25 32 29 Q38 31 36 34 Q30 36 28 37 Q20 44 31 50 Q42 54 50 44 Q55 34 48 25 Q62 34 58 48 Q50 62 33 59 Q12 52 12 27Z" fill="url(#ff)" />
          </Art>
        </Tile>
        <span className="mx-auto mt-[10px] block h-2 w-2 rounded-full bg-black" />
      </div>
      <Tile bg="bg-white">
        <Art>
          <rect x="19" y="12" width="40" height="48" rx="3" fill="#1d3f8c" />
          <path d="M19 12H59V24H19Z" fill="#5a9fe6" /><path d="M19 24H59V36H19Z" fill="#4179cc" /><path d="M19 36H59V48H19Z" fill="#2b5cb8" />
          <rect x="6" y="22.500" width="27" height="27" rx="3" fill="#2350a8" />
          <text x="19.500" y="43" textAnchor="middle" fontSize="19" fontWeight="600" fill="#fff">W</text>
        </Art>
      </Tile>
      <Tile bg="bg-[linear-gradient(155deg,#5cc3c6,#44b0cf_35%,#4a5ee0_62%,#7d2ae0)]">
        <span className="-rotate-3 font-[Lato] text-[24px] font-bold tracking-[-1px] text-white italic">Canva</span>
      </Tile>
      <div className="flex w-[41px] shrink-0 justify-center"><span className="-mt-[3px] h-[84px] w-[2px] bg-[#565656]" /></div>
      <div className="flex w-[94.100px] shrink-0 justify-center">
        <svg viewBox="0 0 84 72" className="h-[72px] w-[84px]">
          <path d="M1 8 Q1 2 6 2 H22 Q26 2 29 6 L32 9 H78 Q83 9 83 14 V30 H1Z" fill="#4a97cf" />
          <rect x="1" y="13.500" width="82" height="57" rx="5" fill="#86c8f4" />
          <path d="M1 64H83" stroke="#6fb4e2" strokeWidth="1.500" />
          <circle cx="42" cy="39" r="15.500" fill="#5ba5d8" />
          <path d="M42 31V46M36.500 41L42 46.500L47.500 41" fill="none" stroke="#a5d8f8" strokeWidth="2.400" strokeLinecap="round" />
        </svg>
      </div>
      <div className="flex w-[94.100px] shrink-0 justify-center">
        <div className="relative mt-[15px] flex h-[41px] w-[84px] bg-white shadow-[0_1px_3px_rgba(0,0,0,0.4)]">
          <span className="flex w-[18px] flex-col gap-[3px] bg-[#e6e4e4] py-[4px] pl-[4px]">
            <i className="h-[2px] w-[8px] bg-[#c4c4c4]" /><i className="h-[2px] w-[10px] bg-[#c4c4c4]" /><i className="h-[2px] w-[8px] bg-[#c4c4c4]" /><i className="h-[2px] w-[10px] bg-[#c4c4c4]" /><i className="h-[2px] w-[9px] bg-[#c4c4c4]" />
          </span>
          <span className="flex-1 border-t-4 border-[#efefef]">
            <span className="mt-[3px] ml-[3px] flex gap-[4px]"><i className="h-[7px] w-[7px] bg-[#cfcfcf]" /><i className="h-[6px] w-[7px] bg-[#5cb4ea]" /></span>
          </span>
          <span className="absolute top-[33px] left-[55px] h-[28px] w-[28px] overflow-hidden rounded-[6px]"><FinderFace /></span>
        </div>
      </div>
      <div className="-mt-[8px] flex w-[94.100px] shrink-0 justify-center">
        <svg viewBox="0 0 64 84" className="h-[84px] w-[64px]">
          <defs><linearGradient id="tr"><stop stopColor="#bdbdbd" /><stop offset="0.300" stopColor="#e6e6e6" /><stop offset="0.700" stopColor="#dcdcdc" /><stop offset="1" stopColor="#b4b4b4" /></linearGradient></defs>
          <path d="M1 10 L9 77 Q10 83 18 83 H46 Q54 83 55 77 L63 10 Q60 20 32 20 Q4 20 1 10Z" fill="url(#tr)" />
          <ellipse cx="32" cy="12" rx="31" ry="8.500" fill="#a6a6a6" stroke="#d8d8d8" strokeWidth="2" />
          <path d="M6 10 L20 1 L30 7 L38 2 L48 4 L59 14 L44 19 L22 19Z" fill="#e9e9e9" />
          <path d="M14 12 L22 8 L28 15 L20 18Z" fill="#3a3d48" /><path d="M34 7 L40 3 L44 12 L36 18Z" fill="#4d4d55" />
          <path d="M24 8 L31 9 L28 13Z" fill="#4ab6d8" /><path d="M36 14 L42 12 L43 17Z" fill="#e0742c" />
        </svg>
      </div>
    </div>
  );
}

export default function App() {
  return (
    <div className="relative flex h-[1800px] w-[2880px] flex-col overflow-hidden bg-[#484848] font-[Inter,'Liberation_Sans',sans-serif]">
      <MenuBar />
      <div className="relative flex h-[1624px] shrink-0">
        <div className="flex w-[12px] shrink-0 flex-col border-l-[9px] border-[#464646]">
          <span className="h-[168px] rounded-tl-[3px] bg-[#b0b3b8]" />
          <span className="h-[81px] bg-[#111215]" />
          <span className="h-[96px] bg-[#1f5aa8]" />
          <span className="h-[1225px] bg-[#2c2d30]" />
          <span className="flex-1 bg-[#2b56c0]" />
        </div>
        <div className="flex w-[2868px] flex-col overflow-hidden rounded-[22px] shadow-[0_0_0_1px_rgba(0,0,0,0.4),0_10px_50px_rgba(0,0,0,0.55)]">
          <Toolbar />
          <TabStrip />
          <Site />
        </div>
      </div>
      <Dock />
    </div>
  );
}
